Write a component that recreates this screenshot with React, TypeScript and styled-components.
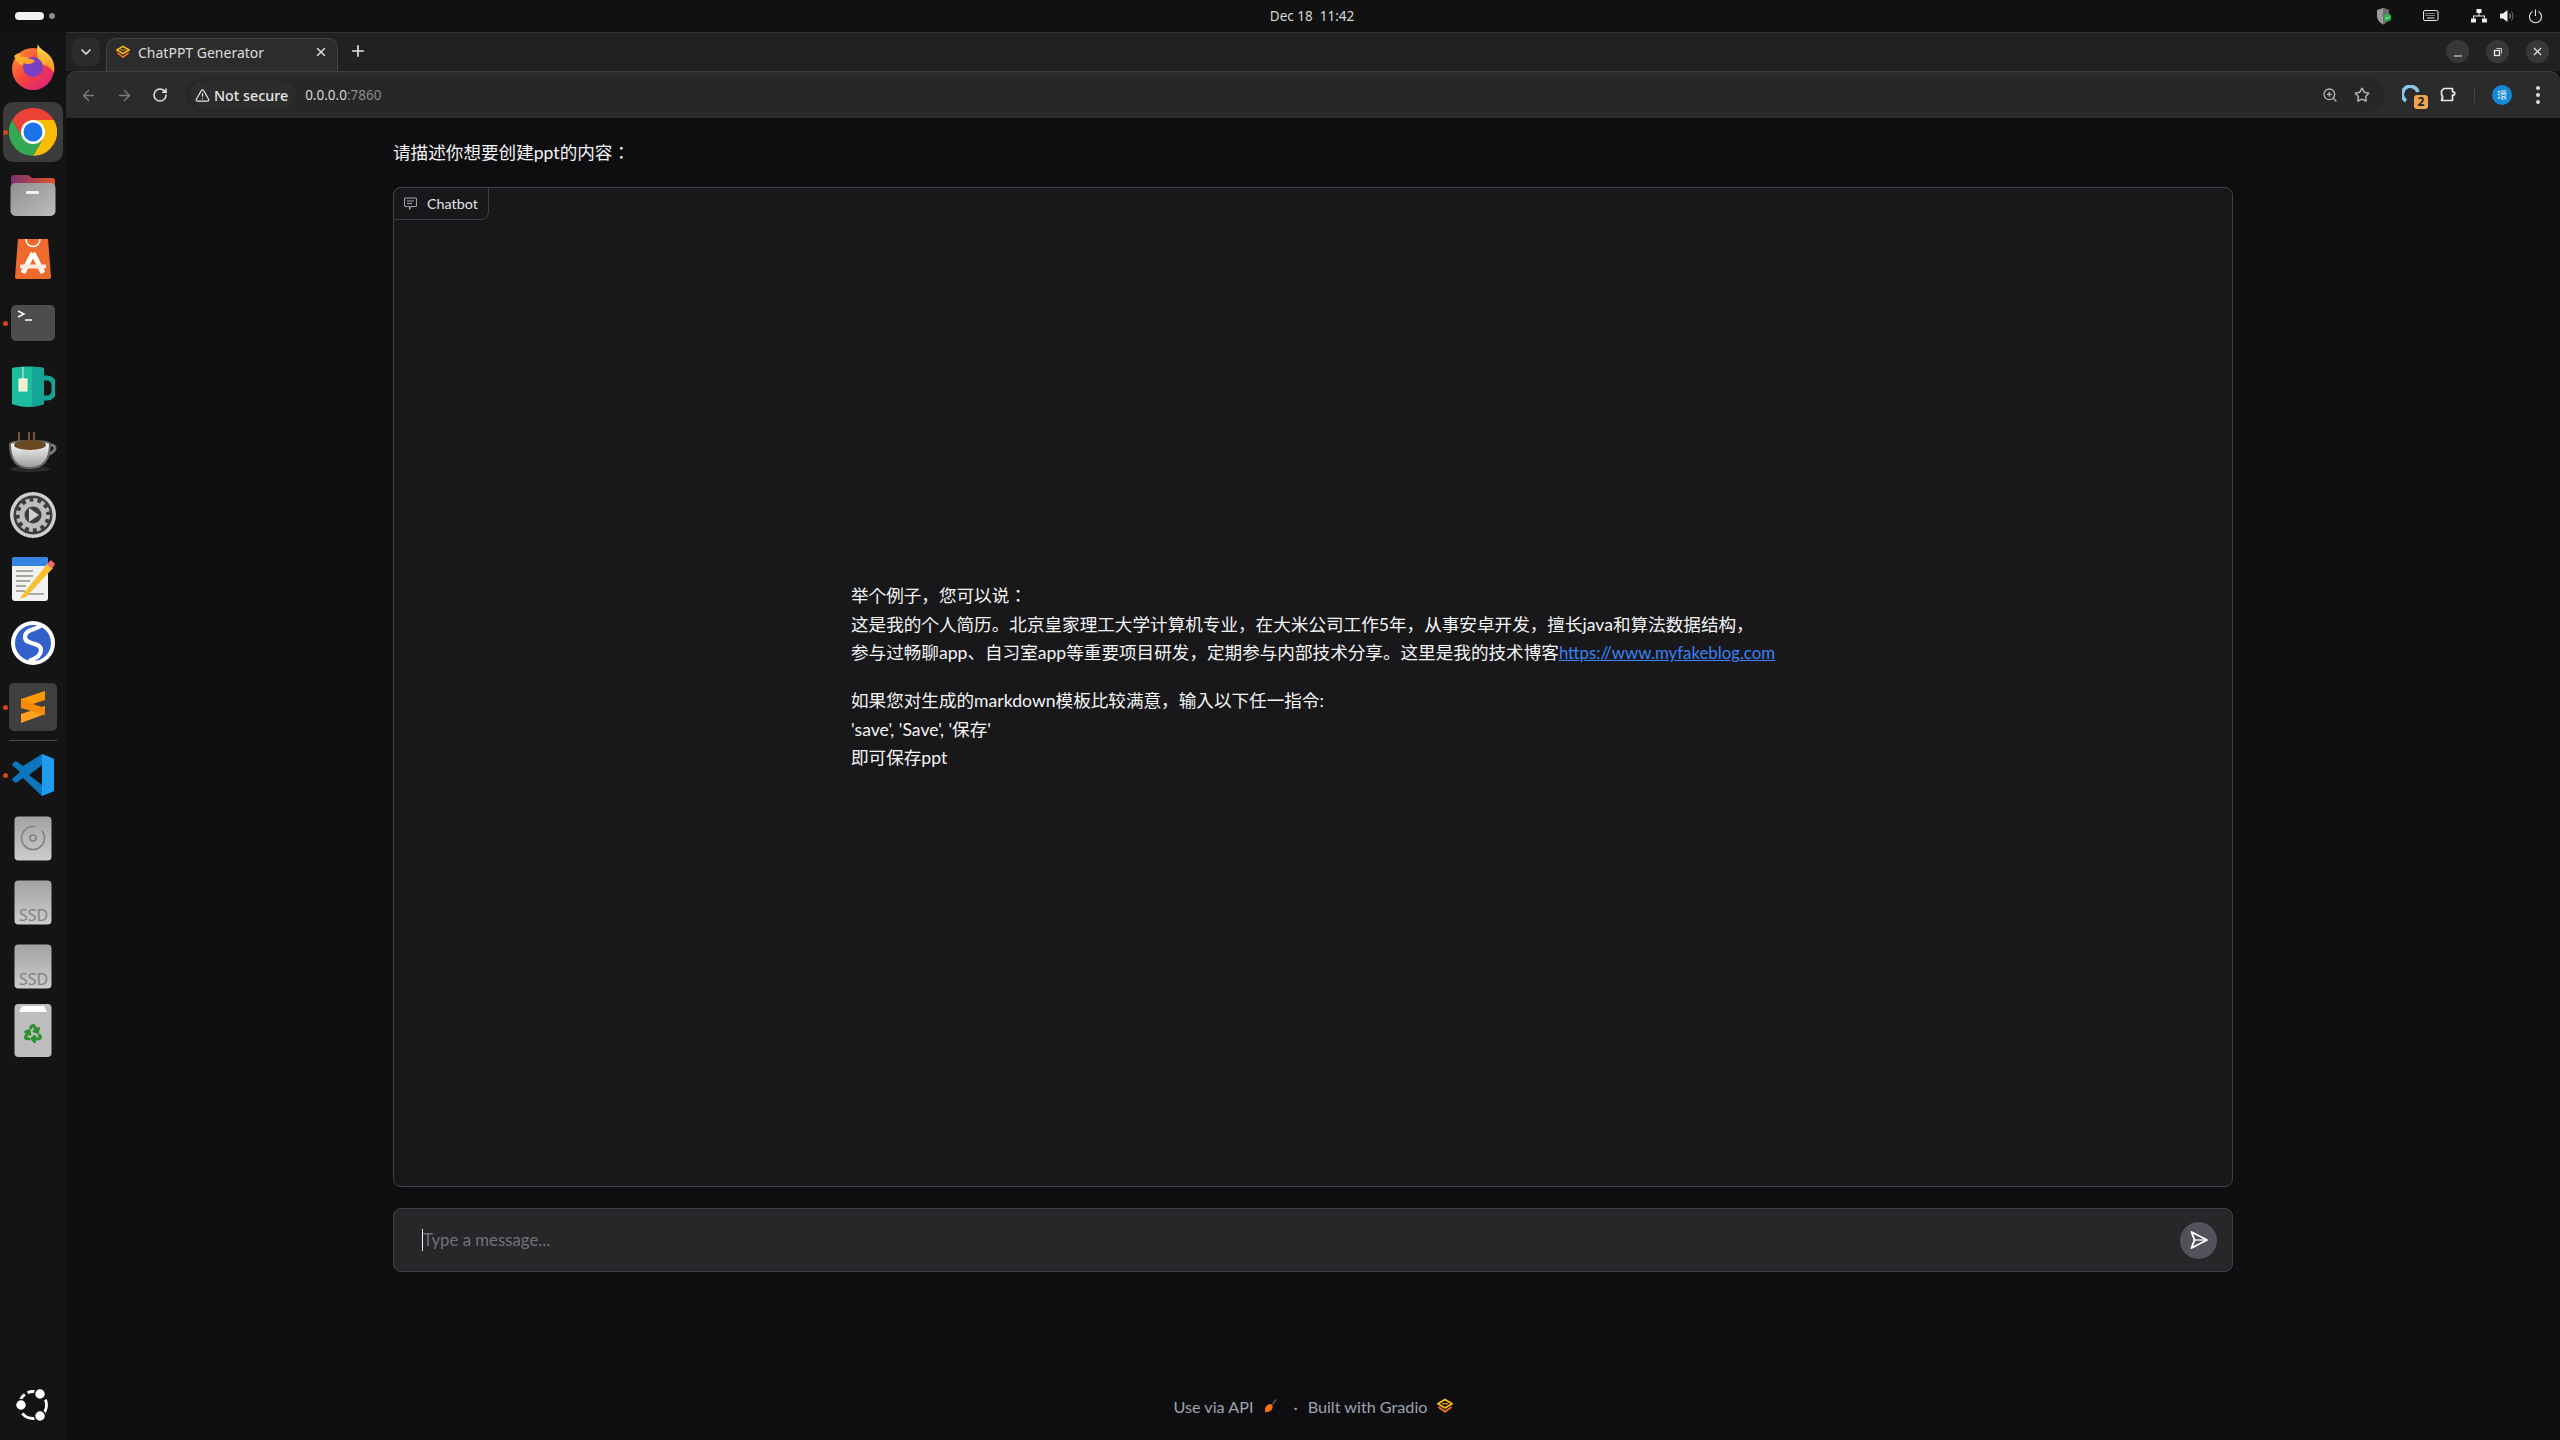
import React from "react";
import styled, { createGlobalStyle } from "styled-components";
import {
  ArrowLeft,
  ArrowRight,
  ChevronDown,
  Plus,
  Recycle,
  RotateCw,
  Star,
  TriangleAlert,
  X,
  ZoomIn,
} from "lucide-react";

const GlobalStyle = createGlobalStyle`
  html, body {
    margin: 0;
    padding: 0;
    background: #0e0e11;
  }
  * {
    box-sizing: border-box;
  }
`;

const uiFont = `"Noto Sans", "Noto Sans CJK SC", sans-serif`;
// Lato stands in for Source Sans; CJK falls through to the JP cut (centred colons)
const pageFont = `Lato, "Noto Sans CJK JP", sans-serif`;

const Desktop = styled.div`
  width: 2560px;
  height: 1440px;
  display: flex;
  flex-direction: column;
  overflow: hidden;
  background: #121212;
`;

const TopBar = styled.header`
  height: 32px;
  flex: none;
  display: grid;
  grid-template-columns: 1fr auto 1fr;
  align-items: center;
  padding: 0 17px 0 15px;
  background: #111112;
  color: #d8d8d8;
  font: 13.5px ${uiFont};
`;

const Workspaces = styled.div`
  display: flex;
  align-items: center;
  gap: 5px;
`;

const WorkspacePill = styled.span<{ $active?: boolean }>`
  display: block;
  width: ${(p) => (p.$active ? "29px" : "6px")};
  height: ${(p) => (p.$active ? "8px" : "6px")};
  border-radius: 4px;
  background: ${(p) => (p.$active ? "#f2f2f2" : "#8a8a8a")};
`;

const Clock = styled.div`
  margin-left: 66px;
  margin-top: -1px;
  white-space: pre;
`;

const Tray = styled.div`
  display: flex;
  align-items: center;
  justify-content: flex-end;
`;

const TraySlot = styled.span<{ $gap: number }>`
  display: flex;
  margin-left: ${(p) => p.$gap}px;
`;

const Body = styled.div`
  flex: 1;
  display: flex;
  min-height: 0;
`;

const Dock = styled.nav`
  width: 66px;
  flex: none;
  display: flex;
  flex-direction: column;
  align-items: center;
  padding: 3px 0 3px;
  background: #141414;
`;

const DockItem = styled.div<{ $active?: boolean; $running?: boolean }>`
  position: relative;
  width: 60px;
  height: ${(p) => (p.$active ? "60px" : "64px")};
  margin: ${(p) => (p.$active ? "3px 0 1px" : "0")};
  flex: none;
  display: flex;
  align-items: center;
  justify-content: center;
  border-radius: 10px;
  background: ${(p) => (p.$active ? "#3c3c3c" : "transparent")};

  &::before {
    content: "";
    display: ${(p) => (p.$running ? "block" : "none")};
    position: absolute;
    left: 0;
    top: 50%;
    width: 5px;
    height: 5px;
    margin-top: -2px;
    border-radius: 50%;
    background: #d5451b;
  }
`;

const SublimeTile = styled.div`
  width: 48px;
  height: 48px;
  display: flex;
  align-items: center;
  justify-content: center;
  border-radius: 5px;
  background: #3f3f3f;
`;

const DockDivider = styled.div`
  width: 48px;
  height: 1px;
  flex: none;
  margin: 1px 0 2px;
  background: #4a4a4a;
`;

const DockSpacer = styled.div`
  flex: 1;
`;

const Browser = styled.main`
  flex: 1;
  min-width: 0;
  display: flex;
  flex-direction: column;
`;

const TabStrip = styled.div`
  height: 39px;
  flex: none;
  display: flex;
  align-items: flex-end;
  padding-left: 6px;
  border-top: 1px solid #333;
  background: #212121;
`;

const TabMenu = styled.div`
  width: 28px;
  height: 28px;
  margin-bottom: 5px;
  display: flex;
  align-items: center;
  justify-content: center;
  border-radius: 8px;
  background: #2b2b2b;
  color: #e4e4e4;
`;

const Tab = styled.div`
  width: 232px;
  height: 33px;
  margin-left: 6px;
  display: flex;
  align-items: center;
  padding: 0 9px 6px 9px;
  border: 1px solid #444;
  border-bottom: 0;
  border-radius: 10px 10px 0 0;
  background: #2c2c2c;
  color: #dcdcdc;
  font: 14px ${uiFont};
`;

const TabTitle = styled.span`
  flex: 1;
  margin-left: 8px;
`;

const NewTab = styled.div`
  margin: 0 0 11px 11px;
  display: flex;
  color: #e4e4e4;
`;

const WindowControls = styled.div`
  margin: 0 11px 8px auto;
  display: flex;
  gap: 17px;
`;

const WindowButton = styled.div`
  width: 23px;
  height: 23px;
  display: flex;
  align-items: center;
  justify-content: center;
  border-radius: 50%;
  background: #383838;
  color: #e8e8e8;
`;

const Toolbar = styled.div`
  height: 47px;
  flex: none;
  display: flex;
  align-items: center;
  padding: 0 0 0 4px;
  border-top: 1px solid #3e3e3e;
  border-radius: 10px 10px 0 0;
  background: #2b2b2b;
  color: #dcdcdc;
`;

const NavButton = styled.div<{ $dim?: boolean }>`
  width: 36px;
  display: flex;
  justify-content: center;
  color: ${(p) => (p.$dim ? "#7c7c7c" : "#e2e2e2")};
`;

const Omnibox = styled.div`
  flex: 1;
  height: 34px;
  margin-left: 8px;
  display: flex;
  align-items: center;
  padding: 0 15px 0 4px;
  border-radius: 17px;
  background: #272727;
  font: 14.3px ${uiFont};
`;

const SecurityChip = styled.div`
  height: 28px;
  display: flex;
  align-items: center;
  gap: 4px;
  padding: 0 8px 0 5px;
  border-radius: 14px;
  background: #2c2c2c;
  color: #e6e6e6;
  font-weight: 500;
`;

const Url = styled.span`
  margin-left: 9px;
  color: #d8d8d8;
  font-size: 13.5px;

  span {
    color: #8a8a8a;
  }
`;

const OmniActions = styled.div`
  margin-left: auto;
  display: flex;
  align-items: center;
  gap: 16px;
  color: #b4b4b4;
`;

const ToolbarEnd = styled.div`
  width: 175px;
  flex: none;
  display: flex;
  align-items: center;
`;

const ExtensionSlot = styled.div`
  position: relative;
  width: 20px;
  height: 20px;
  margin-left: 17px;
`;

const CountBadge = styled.span`
  position: absolute;
  right: -6px;
  bottom: -4px;
  width: 14px;
  height: 14px;
  border-radius: 3px;
  background: #f0a64e;
  color: #222;
  font: 700 12px/14px ${uiFont};
  text-align: center;
`;

const ToolbarDivider = styled.span`
  width: 1px;
  height: 16px;
  margin-left: 15px;
  background: #444;
`;

const Avatar = styled.span`
  width: 20px;
  height: 20px;
  margin-left: 17px;
  border-radius: 50%;
  background: #1487d6;
  color: #d8eeff;
  font: 10px/20px "Noto Sans CJK TC", sans-serif;
  text-align: center;
`;

const MenuDots = styled.span`
  margin-left: 24px;
  display: flex;
  flex-direction: column;
  gap: 3px;

  i {
    display: block;
    width: 4px;
    height: 4px;
    border-radius: 50%;
    background: #dcdcdc;
  }
`;

const Page = styled.div`
  flex: 1;
  min-height: 0;
  display: flex;
  flex-direction: column;
  align-items: center;
  background: #0e0e11;
  font-family: ${pageFont};
  color: #f4f4f5;
`;

const Column = styled.div`
  width: 1840px;
  flex: 1;
  display: flex;
  flex-direction: column;
`;

const Heading = styled.p`
  margin: 21px 0 20px;
  font-size: 17.6px;
  line-height: 28px;
`;

const ChatPanel = styled.section`
  position: relative;
  height: 1000px;
  flex: none;
  display: flex;
  align-items: center;
  justify-content: center;
  padding-bottom: 19px;
  border: 1px solid #3f3f46;
  border-radius: 8px;
  background: #18181b;
`;

const PanelLabel = styled.div`
  position: absolute;
  left: -1px;
  top: -1px;
  height: 33px;
  display: flex;
  align-items: center;
  gap: 10px;
  padding: 0 10px;
  border: 1px solid #3f3f46;
  border-radius: 8px 0 8px 0;
  background: #18181b;
  color: #e4e4e7;
  font-size: 14.3px;
`;

const Placeholder = styled.div`
  font-size: 17.6px;
  line-height: 28.6px;
  color: #f4f4f5;

  p {
    margin: 0 0 19px;
  }
  p:last-child {
    margin-bottom: 0;
  }
  a {
    color: #3b82f6;
    font-size: 16.8px;
    text-decoration: underline;
  }
`;

const Composer = styled.div`
  height: 64px;
  flex: none;
  margin-top: 21px;
  display: flex;
  align-items: center;
  padding: 0 15px 0 28px;
  border: 1px solid #3f3f46;
  border-radius: 8px;
  background: #27272a;
`;

const Caret = styled.span`
  width: 1px;
  height: 22px;
  flex: none;
  background: #f4f4f5;
`;

const ComposerHint = styled.span`
  flex: 1;
  padding-bottom: 2px;
  color: #71717a;
  font-size: 16.8px;
`;

const SendButton = styled.div`
  width: 37px;
  height: 37px;
  display: flex;
  align-items: center;
  justify-content: center;
  border-radius: 50%;
  background: #52525b;
`;

const Footer = styled.footer`
  margin-top: auto;
  padding-bottom: 22px;
  height: 46px;
  display: flex;
  align-items: center;
  justify-content: center;
  color: #9ca3af;
  font-size: 16.2px;
`;

const FooterDot = styled.span`
  margin: 0 10px 0 15px;
`;

const FooterIcon = styled.span`
  display: flex;
  margin-left: 9px;
`;

const GradioLogo = ({ size = 16 }: { size?: number }) => (
  <svg width={size} height={size} viewBox="0 0 16 16" fill="none" strokeWidth="1.800" strokeLinejoin="round">
    <path d="M8 1.500 15 5.700 8 9.900 1 5.700Z" stroke="#fbbf24" />
    <path d="M1.500 9 8 13.800 14.500 9" stroke="#f97316" />
    <path d="M5 5.700h6" stroke="#f59e0b" strokeWidth="1.200" />
  </svg>
);

const ApiIcon = () => (
  <svg width="16" height="16" viewBox="0 0 16 16">
    <path d="M9.500 6.500 13 1.500c1-.8 2 .2 1.400 1.200L10.500 7.500Z" fill="#4b5563" />
    <path d="M4 8.500c1.500-2 4-3 5.500-2l1 1.500c.6 2-1 4.500-3.500 5.500-1 .4-2 .5-3 .5l-1 1 .3-2C2.500 11.500 3 9.800 4 8.500Z" fill="#f97316" />
  </svg>
);

const ChatIcon = () => (
  <svg width="13" height="13" viewBox="0 0 13 13" fill="none" stroke="#a1a1aa" strokeWidth="1.100">
    <path d="M1.500 1h10a1 1 0 0 1 1 1v6.500a1 1 0 0 1-1 1H7.500L5.500 12V9.500h-4a1 1 0 0 1-1-1V2a1 1 0 0 1 1-1Z" />
    <path d="M3 4h7M3 6.500h5" />
  </svg>
);

const SendIcon = () => (
  <svg width="20" height="20" viewBox="0 0 20 20" fill="none" stroke="#fff" strokeWidth="1.900" strokeLinejoin="round">
    <path d="M2.500 2 18 10 2.500 18 5.500 10Z" />
    <path d="M5.500 10H18" strokeWidth="1.300" />
  </svg>
);

const ShieldIcon = () => (
  <svg width="16" height="17" viewBox="0 0 16 17">
    <path d="M7 0 13 2v6c0 4-3 7-6 8.500C4 15 1 12 1 8V2Z" fill="#9a9a9a" />
    <path d="M7 0 13 2v6c0 4-3 7-6 8.500Z" fill="#6c6c6c" />
    <circle cx="11.500" cy="9.500" r="3.700" fill="#2fb34f" />
    <path d="M9.800 9.600 11 10.700 13 8.700" stroke="#d8f5de" fill="none" strokeWidth=".9" />
  </svg>
);

const KeyboardIcon = () => (
  <svg width="16" height="12" viewBox="0 0 16 12" fill="none" stroke="#e8e8e8">
    <rect x=".5" y=".5" width="14.500" height="10" rx="1.500" />
    <path d="M2.500 3.500h10M2.500 5.500h10" strokeDasharray="1 1" />
    <path d="M4 8h7.500" />
  </svg>
);

const NetworkIcon = () => (
  <svg width="16" height="14" viewBox="0 0 16 14" fill="#f0f0f0">
    <rect x="5.500" y="0" width="5" height="4" />
    <rect x="0" y="9.500" width="5" height="4" rx=".5" />
    <rect x="11" y="9.500" width="5" height="4" rx=".5" />
    <path d="M7.500 4h1v2.500h5.500v3h-1v-2H3v2H2v-3h5.500Z" />
  </svg>
);

const VolumeIcon = () => (
  <svg width="16" height="14" viewBox="0 0 16 14" fill="none">
    <path d="M0 4.500h3L7.500 1v12L3 9.500H0Z" fill="#f0f0f0" />
    <path d="M9.500 4.500c1 1.500 1 3.500 0 5" stroke="#bbb" />
    <path d="M11.500 2.500c2 2.500 2 6.500 0 9" stroke="#777" />
  </svg>
);

const PowerIcon = () => (
  <svg width="15" height="15" viewBox="0 0 15 15" fill="none" stroke="#e8e8e8" strokeWidth="1.100">
    <path d="M4.500 2.500a6 6 0 1 0 6 0" />
    <path d="M7.500 .5v6.500" />
  </svg>
);

const ExtensionRing = () => (
  <svg width="20" height="20" viewBox="0 0 20 20" fill="none" stroke="#8cc4ee" strokeWidth="3.600">
    <path d="M4 16A8 8 0 1 1 16 7" />
  </svg>
);

const PuzzleIcon = () => (
  <svg width="18" height="18" viewBox="0 0 18 18" fill="none" stroke="#e8e8e8" strokeWidth="1.700" strokeLinejoin="round">
    <path d="M5 3.500 H13.500 V7 c3-1 3 4 0 3 V15.500 H2.500 c1.500-2 1.500-4 0-6 V6 Z" />
  </svg>
);

const FirefoxIcon = () => (
  <svg width="44" height="46" viewBox="0 0 44 46">
    <defs>
      <linearGradient id="ffBody" x1="0" y1="0" x2="1" y2="1">
        <stop offset="0" stopColor="#ff9a2e" />
        <stop offset=".5" stopColor="#f7413f" />
        <stop offset="1" stopColor="#d91b8a" />
      </linearGradient>
      <linearGradient id="ffFlame" x1="0" y1="0" x2="0" y2="1">
        <stop offset="0" stopColor="#ffe14d" />
        <stop offset="1" stopColor="#ff8a1f" />
      </linearGradient>
    </defs>
    <circle cx="22" cy="25" r="21" fill="url(#ffBody)" />
    <path d="M27 0c1 5 6 6 11 11 5 5 6 12 5 18-3-5-7-8-13-9-4-5-5-13-3-20Z" fill="url(#ffFlame)" />
    <path d="M3 12c2-2 4-3 7-3-1 2-1 3 0 4 4-1 8 0 11 3-6 0-9 2-10 6-3-2-6-5-8-10Z" fill="#ffb02e" />
    <circle cx="22" cy="23" r="10" fill="#7b3fc4" />
    <path d="M11 18c4 3 9 3 13-1-2-2-6-3-9-2-2 0-3 1-4 3Z" fill="#ff9f2e" />
  </svg>
);

const ChromeIcon = () => (
  <svg width="48" height="48" viewBox="0 0 48 48">
    <path d="M24 12H44.800A24 24 0 0 0 3.200 12L13.600 30 24 24Z" fill="#ea4335" />
    <path d="M44.800 12H24V24L34.400 30 24 48A24 24 0 0 0 44.800 12Z" fill="#fbbc04" />
    <path d="M3.200 12 13.600 30 24 24 34.400 30 24 48A24 24 0 0 1 3.200 12Z" fill="#34a853" />
    <circle cx="24" cy="24" r="12" fill="#fff" />
    <circle cx="24" cy="24" r="9.500" fill="#1a73e8" />
  </svg>
);

const FilesIcon = () => (
  <svg width="46" height="42" viewBox="0 0 46 42">
    <defs>
      <linearGradient id="fileTab" x1="0" x2="1" y1="0" y2="0">
        <stop offset="0" stopColor="#7d2f6d" />
        <stop offset="1" stopColor="#e0552a" />
      </linearGradient>
      <linearGradient id="fileBody" x1="0" x2="1" y1="0" y2="1">
        <stop offset="0" stopColor="#8f8f8f" />
        <stop offset="1" stopColor="#bdbdbd" />
      </linearGradient>
    </defs>
    <path d="M1 4a3 3 0 0 1 3-3h14l4 3h20a3 3 0 0 1 3 3v10H1Z" fill="url(#fileTab)" />
    <rect x="0.500" y="9" width="45" height="33" rx="5" fill="url(#fileBody)" />
    <rect x="16" y="17" width="13" height="3" rx="1" fill="#f0f0f0" />
  </svg>
);

const StoreIcon = () => (
  <svg width="38" height="44" viewBox="0 0 38 44">
    <path d="M4 2h30l3 38a2 2 0 0 1-2 2H3a2 2 0 0 1-2-2Z" fill="#ef6a2c" />
    <path d="M12 2c0 10 14 10 14 0" fill="none" stroke="#fff" strokeWidth="1.500" />
    <path d="M19 16 9 36M19 16 29 36" stroke="#fff" strokeWidth="5" />
    <path d="M6 29.500h26" stroke="#ffe9dd" strokeWidth="4" />
  </svg>
);

const TerminalIcon = () => (
  <svg width="44" height="36" viewBox="0 0 44 36">
    <rect width="44" height="36" rx="5" fill="#4d4d4d" />
    <path d="M7 6 13 9 7 12" fill="none" stroke="#fff" strokeWidth="1.500" />
    <path d="M14 15h7" stroke="#fff" strokeWidth="1.500" />
  </svg>
);

const MugIcon = () => (
  <svg width="44" height="42" viewBox="0 0 44 42">
    <path d="M32 12h4a7 7 0 0 1 7 7v6a7 7 0 0 1-7 7h-4" fill="none" stroke="#14a594" strokeWidth="5" />
    <path d="M1 2c10-2 22-2 32 0v36c-10 4-22 4-32 0Z" fill="#1cbc9f" />
    <path d="M21 1c4 0 8 .500 12 1v36c-4 1.500-8 2.500-12 2.500Z" fill="#14a594" />
    <path d="M12 1v12" stroke="#f2f2dc" />
    <rect x="8" y="13" width="8" height="12" fill="#f2f2c4" stroke="#fff" />
  </svg>
);

const CoffeeIcon = () => (
  <svg width="48" height="42" viewBox="0 0 48 42">
    <defs>
      <linearGradient id="cup" x1="0" x2="0" y1="0" y2="1">
        <stop offset="0" stopColor="#fff" />
        <stop offset="1" stopColor="#9a9a9a" />
      </linearGradient>
    </defs>
    <ellipse cx="21" cy="39" rx="20" ry="3" fill="#2a2a2a" />
    <path d="M10 2v9M20 2v9M25 2v9" stroke="#6c5340" strokeWidth="2.200" />
    <path d="M33 19c5-5 13-5 13-1s-7 7-12 8" fill="none" stroke="#777" strokeWidth="3" />
    <path d="M1 14c0-4 40-4 40 0 0 14-5 24-20 24S1 28 1 14Z" fill="url(#cup)" stroke="#666" strokeWidth="2" />
    <ellipse cx="21" cy="15" rx="16" ry="5" fill="#6a4a22" />
  </svg>
);

const SettingsIcon = () => (
  <svg width="46" height="46" viewBox="0 0 46 46">
    <circle cx="23" cy="23" r="23" fill="#cfcfcf" />
    <circle cx="23" cy="23" r="19.500" fill="#3c3c3c" />
    <circle cx="23" cy="23" r="11" fill="none" stroke="#bdbdbd" strokeWidth="5" />
    <circle cx="23" cy="23" r="15" fill="none" stroke="#bdbdbd" strokeWidth="4" strokeDasharray="4 3.850" />
    <path d="M19 16 29 23 19 30Z" fill="#cfcfcf" />
  </svg>
);

const NotesIcon = () => (
  <svg width="44" height="46" viewBox="0 0 44 46">
    <rect x="1" y="1" width="36" height="44" rx="3" fill="#f2f2f2" />
    <path d="M1 4a3 3 0 0 1 3-3h30a3 3 0 0 1 3 3v6H1Z" fill="#3584e4" />
    <path d="M5 15h17M5 20h17M5 25h14M5 30h10M5 35h9M14 38h19" stroke="#a9a9a0" strokeWidth="1.800" />
    <path d="M37 7 12 38l-3 5 6-2L42 12Z" fill="#f8c02e" />
    <path d="M36 8 41 13 44 8 40 4Z" fill="#ee6a6a" />
  </svg>
);

const SimplenoteIcon = () => (
  <svg width="44" height="44" viewBox="0 0 44 44">
    <circle cx="22" cy="22" r="22" fill="#fff" />
    <circle cx="22" cy="22" r="18" fill="#3361cc" />
    <path d="M31 4c-6 5-17 4-17 12 0 9 16 4 16 13 0 5-6 9-12 11" fill="none" stroke="#fff" strokeWidth="4.200" />
  </svg>
);

const SublimeIcon = () => (
  <svg width="24" height="32" viewBox="0 0 24 32">
    <path d="M24 0V9L0 17V8Z" fill="#ff9800" />
    <path d="M24 15V23L0 32V23Z" fill="#ffa01f" />
    <path d="M0 9 24 17V24L0 17Z" fill="#f58a07" />
  </svg>
);

const CodeIcon = () => (
  <svg width="42" height="42" viewBox="0 0 42 42">
    <path d="M30 0 42 5v32l-12 5L11 24l-7 5-3-2-1-2 8-7-8-7 1-2 3-2 7 5Z" fill="#0e76bc" />
    <path d="M30 0 42 5v32l-12 5Z" fill="#1f9cf0" />
    <path d="M30 11 17 21l13 10Z" fill="#141414" />
  </svg>
);

const DriveIcon = ({ children }: { children?: React.ReactNode }) => (
  <svg width="38" height="46" viewBox="0 0 38 46">
    <defs>
      <linearGradient id="drive" x1="0" x2="0" y1="0" y2="1">
        <stop offset="0" stopColor="#a2a2a2" />
        <stop offset="1" stopColor="#cdcdcd" />
      </linearGradient>
    </defs>
    <rect x=".5" y=".5" width="37" height="44" rx="4" fill="url(#drive)" />
    {children}
  </svg>
);

const TrashIcon = () => (
  <svg width="38" height="54" viewBox="0 0 38 54">
    <rect x=".5" y="0" width="37" height="53" rx="4" fill="#bdbdbd" />
    <path d="M5 8 8 2h22l3 6Z" fill="#fff" />
    <Recycle x={9} y={19} size={20} color="#2e8f2e" strokeWidth={3.600} />
  </svg>
);

const UbuntuIcon = () => (
  <svg width="36" height="36" viewBox="0 0 36 36" fill="none">
    <circle cx="18" cy="18" r="13.500" stroke="#fff" strokeWidth="2.800" strokeDasharray="18 3.200" strokeDashoffset="6" />
    <circle cx="25" cy="7" r="5.500" fill="#fff" stroke="#141414" strokeWidth="1.500" />
    <circle cx="6" cy="18" r="5.500" fill="#fff" stroke="#141414" strokeWidth="1.500" />
    <circle cx="25" cy="29" r="5.500" fill="#fff" stroke="#141414" strokeWidth="1.500" />
  </svg>
);

export default function App() {
  return (
    <Desktop>
      <GlobalStyle />
      <TopBar>
        <Workspaces>
          <WorkspacePill $active />
          <WorkspacePill />
        </Workspaces>
        <Clock>Dec 18  11:42</Clock>
        <Tray>
          <TraySlot $gap={0}><ShieldIcon /></TraySlot>
          <TraySlot $gap={31}><KeyboardIcon /></TraySlot>
          <TraySlot $gap={32}><NetworkIcon /></TraySlot>
          <TraySlot $gap={13}><VolumeIcon /></TraySlot>
          <TraySlot $gap={12}><PowerIcon /></TraySlot>
        </Tray>
      </TopBar>
      <Body>
        <Dock>
          <DockItem><FirefoxIcon /></DockItem>
          <DockItem $active $running><ChromeIcon /></DockItem>
          <DockItem><FilesIcon /></DockItem>
          <DockItem><StoreIcon /></DockItem>
          <DockItem $running><TerminalIcon /></DockItem>
          <DockItem><MugIcon /></DockItem>
          <DockItem><CoffeeIcon /></DockItem>
          <DockItem><SettingsIcon /></DockItem>
          <DockItem><NotesIcon /></DockItem>
          <DockItem><SimplenoteIcon /></DockItem>
          <DockItem $running><SublimeTile><SublimeIcon /></SublimeTile></DockItem>
          <DockDivider />
          <DockItem $running><CodeIcon /></DockItem>
          <DockItem>
            <DriveIcon>
              <circle cx="19" cy="22" r="11.500" fill="none" stroke="#808080" strokeWidth="1.600" strokeDasharray="56 8" />
              <circle cx="19" cy="22" r="3" fill="none" stroke="#808080" strokeWidth="1.600" />
            </DriveIcon>
          </DockItem>
          <DockItem>
            <DriveIcon>
              <text x="5" y="41" fontSize="16" fill="#808080" fontFamily="Noto Sans, sans-serif">SSD</text>
            </DriveIcon>
          </DockItem>
          <DockItem>
            <DriveIcon>
              <text x="5" y="41" fontSize="16" fill="#808080" fontFamily="Noto Sans, sans-serif">SSD</text>
            </DriveIcon>
          </DockItem>
          <DockItem><TrashIcon /></DockItem>
          <DockSpacer />
          <DockItem><UbuntuIcon /></DockItem>
        </Dock>
        <Browser>
          <TabStrip>
            <TabMenu><ChevronDown size={16} strokeWidth={2.500} /></TabMenu>
            <Tab>
              <GradioLogo size={14} />
              <TabTitle>ChatPPT Generator</TabTitle>
              <X size={14} strokeWidth={2.500} />
            </Tab>
            <NewTab><Plus size={18} strokeWidth={2.200} /></NewTab>
            <WindowControls>
              <WindowButton>
                <svg width="10" height="10" viewBox="0 0 10 10" stroke="#e8e8e8"><path d="M1 9h8" /></svg>
              </WindowButton>
              <WindowButton>
                <svg width="10" height="10" viewBox="0 0 10 10" fill="none" stroke="#e8e8e8">
                  <rect x="1.500" y="3.500" width="5" height="5" strokeWidth="1.300" />
                  <path d="M3.500 1.500h5v5" strokeWidth=".8" />
                </svg>
              </WindowButton>
              <WindowButton><X size={13} strokeWidth={2} /></WindowButton>
            </WindowControls>
          </TabStrip>
          <Toolbar>
            <NavButton $dim><ArrowLeft size={17} /></NavButton>
            <NavButton $dim><ArrowRight size={17} /></NavButton>
            <NavButton><RotateCw size={16} strokeWidth={2.300} /></NavButton>
            <Omnibox>
              <SecurityChip>
                <TriangleAlert size={15} />
                Not secure
              </SecurityChip>
              <Url>0.0.0.0<span>:7860</span></Url>
              <OmniActions>
                <ZoomIn size={16} />
                <Star size={16} strokeWidth={2.200} />
              </OmniActions>
            </Omnibox>
            <ToolbarEnd>
              <ExtensionSlot>
                <ExtensionRing />
                <CountBadge>2</CountBadge>
              </ExtensionSlot>
              <ExtensionSlot><PuzzleIcon /></ExtensionSlot>
              <ToolbarDivider />
              <Avatar>環</Avatar>
              <MenuDots><i /><i /><i /></MenuDots>
            </ToolbarEnd>
          </Toolbar>
          <Page>
            <Column>
              <Heading>请描述你想要创建ppt的内容：</Heading>
              <ChatPanel>
                <PanelLabel>
                  <ChatIcon />
                  Chatbot
                </PanelLabel>
                <Placeholder>
                  <p>
                    举个例子，您可以说：<br />
                    这是我的个人简历。北京皇家理工大学计算机专业，在大米公司工作5年，从事安卓开发，擅长java和算法数据结构，<br />
                    参与过畅聊app、自习室app等重要项目研发，定期参与内部技术分享。这里是我的技术博客<a href="#blog">https://www.myfakeblog.com</a>
                  </p>
                  <p>
                    如果您对生成的markdown模板比较满意，输入以下任一指令:<br />
                    'save', 'Save', '保存'<br />
                    即可保存ppt
                  </p>
                </Placeholder>
              </ChatPanel>
              <Composer>
                <Caret />
                <ComposerHint>Type a message...</ComposerHint>
                <SendButton><SendIcon /></SendButton>
              </Composer>
              <Footer>
                Use via API
                <FooterIcon><ApiIcon /></FooterIcon>
                <FooterDot>·</FooterDot>
                Built with Gradio
                <FooterIcon><GradioLogo /></FooterIcon>
              </Footer>
            </Column>
          </Page>
        </Browser>
      </Body>
    </Desktop>
  );
}
